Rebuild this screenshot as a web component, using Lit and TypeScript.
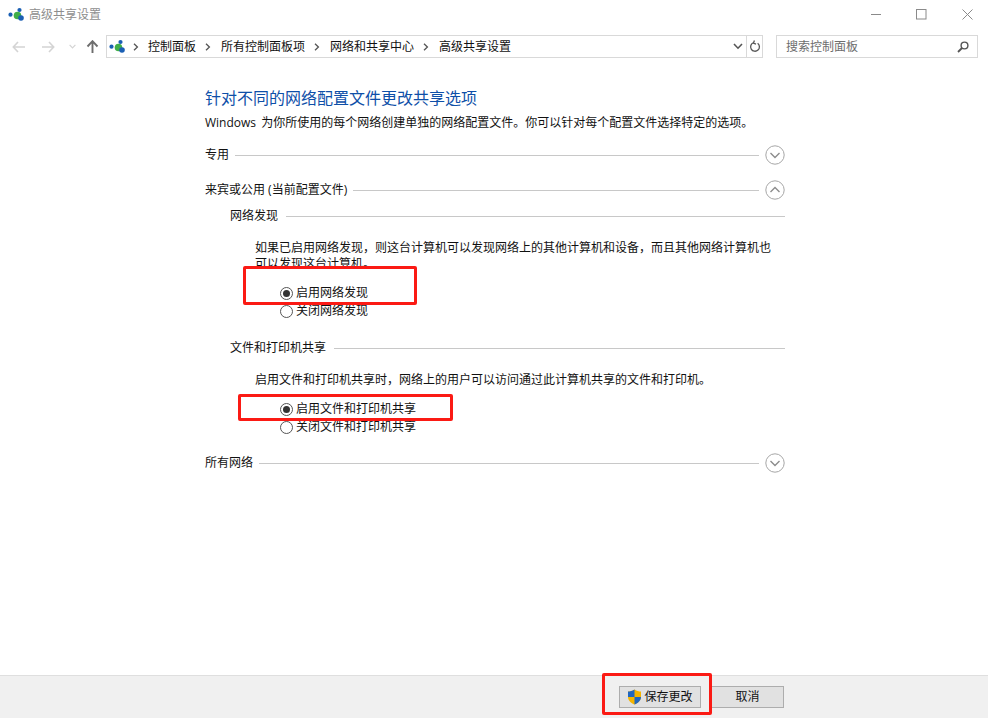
import { LitElement, html, css, svg } from "lit";
import { customElement } from "lit/decorators.js";

const netIcon = svg`<svg class="net" width="18" height="16" viewBox="0 -1 18 16">
  <circle cx="9.5" cy="7.5" r="3.8" fill="#3fae49"/>
  <circle cx="2.5" cy="6.7" r="2.1" fill="#1a5fb4"/>
  <circle cx="11.5" cy="2" r="2.1" fill="#1a5fb4"/>
  <circle cx="13" cy="10" r="2.8" fill="#1a5fb4"/>
</svg>`;

const chev = (up: boolean) => html`<svg class="chev" width="20" height="20" viewBox="0 0 20 20">
  <circle cx="10" cy="10" r="9.2" fill="#fff" stroke="#a6a6a6" stroke-width="1"/>
  <path d=${up ? "M5.5 12 L10 7.5 L14.5 12" : "M5.5 8 L10 12.5 L14.5 8"} fill="none" stroke="#8c8c8c" stroke-width="1.4"/>
</svg>`;

const sep = html`<svg class="sep" width="6" height="8" viewBox="0 0 6 8"><path d="M1 0.8 L4.4 4 L1 7.2" fill="none" stroke="#555" stroke-width="1.3"/></svg>`;

@customElement("app-root")
export class AppRoot extends LitElement {
  static styles = css`
    :host {
      display: flex;
      flex-direction: column;
      position: relative;
      width: 988px;
      height: 718px;
      overflow: hidden;
      background: #fff;
      color: #111;
      font: 12px/16px "Open Sans", "Noto Sans CJK SC", sans-serif;
    }
    .titlebar {
      height: 30px;
      flex: none;
      display: flex;
      align-items: center;
      padding-left: 8px;
      gap: 3px;
      color: #8e8e8e;
    }
    .titlebar .name { flex: 1; }
    .win { display: flex; align-self: flex-start; margin-right: -2px; }
    .win span { width: 45.5px; height: 28px; display: flex; align-items: center; justify-content: center; }
    .nav {
      height: 23px;
      flex: none;
      margin-top: 5px;
      display: flex;
      align-items: center;
      padding-left: 12px;
      padding-right: 10px;
    }
    .navbtns { width: 94px; flex: none; display: flex; align-items: center; }
    .addr {
      width: 657px;
      box-sizing: border-box;
      height: 23px;
      border: 1px solid #d9d9d9;
      display: flex;
      align-items: center;
      padding-left: 2px;
      flex: none;
    }
    .crumbs { flex: 1; display: flex; align-items: center; }
    .crumbs span { margin: 0 9px 0 10px; }
    .crumbs span.lead { margin: 0 0 0 6px; }
    .crumbs span.first { margin-left: 9px; }
    .sep { flex: none; }
    .addr .drop { width: 16px; display: flex; justify-content: center; }
    .addr .ref { width: 15px; height: 21px; border-left: 1px solid #d9d9d9; display: flex; align-items: center; justify-content: center; }
    .search {
      margin-left: 13px;
      width: 202px;
      box-sizing: border-box;
      height: 23px;
      border: 1px solid #d9d9d9;
      display: flex;
      align-items: center;
      justify-content: space-between;
      padding: 0 8px 0 9px;
      color: #6d6d6d;
      flex: none;
    }
    .content {
      flex: 1;
      padding: 0 203px 0 205px;
      box-sizing: border-box;
    }
    h1 {
      margin: 29px 0 0;
      font-size: 16px;
      font-weight: 400;
      line-height: 22px;
      color: #0e4fa8;
    }
    .intro { margin: 6px 0 0; height: 16px; white-space: nowrap; word-spacing: 2px; }
    .group { display: flex; align-items: center; height: 20px; gap: 6px; }
    .group i { flex: 1; height: 1px; background: #c8c8c8; display: block; }
    .g1 { margin-top: 14px; }
    .g2 { margin-top: 15px; }
    .g3 { margin-top: 17px; }
    .sub { display: flex; align-items: center; height: 16px; gap: 8px; margin-left: 25px; }
    .sub i { flex: 1; height: 1px; background: #c8c8c8; display: block; }
    .s1 { margin-top: 8px; }
    .s2 { margin-top: 20px; }
    .para { margin: 0 0 0 50px; width: 520px; line-height: 16px; }
    .p1 { margin-top: 16px; }
    .p2 { margin-top: 16px; }
    .radio { display: flex; align-items: center; height: 18px; margin-left: 75px; gap: 3px; }
    .dot {
      width: 13px; height: 13px; box-sizing: border-box; border-radius: 50%;
      border: 1px solid #555; background: #fff; display: flex; align-items: center; justify-content: center; flex: none;
    }
    .dot.on::after { content: ""; width: 7px; height: 7px; border-radius: 50%; background: #333; }
    .r1 { margin-top: 12px; }
    .r2 { margin-top: 12px; }
    .footer {
      height: 43px;
      flex: none;
      box-sizing: border-box;
      background: #f0f0f0;
      border-top: 1px solid #dfdfdf;
      display: flex;
      justify-content: flex-end;
      align-items: center;
      gap: 10px;
      padding: 0 204px 0 0;
    }
    .btn {
      height: 22px;
      box-sizing: border-box;
      border: 1px solid #adadad;
      background: #e1e1e1;
      color: #111;
      display: flex;
      align-items: center;
      justify-content: center;
      font: inherit;
      padding: 0;
      gap: 2px;
    }
    .save { width: 82px; }
    .cancel { width: 73px; }
    .mark {
      position: absolute;
      box-sizing: border-box;
      border: 3px solid #fb1a14;
      border-radius: 2px;
      pointer-events: none;
    }
    .m1 { left: 243px; top: 266px; width: 174px; height: 39px; }
    .m2 { left: 238px; top: 394px; width: 215px; height: 27px; }
    .m3 { left: 602px; top: 673px; width: 110px; height: 42px; }
  `;

  render() {
    return html`
      <div class="titlebar">
        ${netIcon}
        <span class="name">高级共享设置</span>
        <div class="win">
          <span><svg width="11" height="11" viewBox="0 0 11 11"><path d="M0 5.5H10" stroke="#8a8a8a"/></svg></span>
          <span><svg width="11" height="11" viewBox="0 0 11 11"><rect x="0.5" y="0.5" width="9.5" height="9.5" fill="none" stroke="#8a8a8a"/></svg></span>
          <span><svg width="11" height="11" viewBox="0 0 11 11"><path d="M0.5 0.5L10.5 10.5M10.5 0.5L0.5 10.5" stroke="#8a8a8a"/></svg></span>
        </div>
      </div>
      <div class="nav">
        <div class="navbtns">
          <svg width="14" height="12" viewBox="0 0 14 12" style="margin-right:15px"><path d="M6 1L1.3 6L6 11M1.5 6H13" fill="none" stroke="#d4d4d4" stroke-width="1.6"/></svg>
          <svg width="14" height="12" viewBox="0 0 14 12" style="margin-right:14px"><path d="M8 1L12.7 6L8 11M12.5 6H1" fill="none" stroke="#d4d4d4" stroke-width="1.6"/></svg>
          <svg width="7" height="5" viewBox="0 0 7 5" style="margin-right:10px"><path d="M0.6 0.8L3.5 3.8L6.4 0.8" fill="none" stroke="#d4d4d4" stroke-width="1.2"/></svg>
          <svg width="13" height="13" viewBox="0 0 13 13"><path d="M1.5 6.5L6.5 1.2L11.5 6.5M6.5 1.5V13" fill="none" stroke="#6d6d6d" stroke-width="1.9"/></svg>
        </div>
        <div class="addr">
          ${netIcon}
          <div class="crumbs">
            <span class="lead"></span>${sep}
            <span class="first">控制面板</span>${sep}
            <span>所有控制面板项</span>${sep}
            <span>网络和共享中心</span>${sep}
            <span>高级共享设置</span>
          </div>
          <div class="drop"><svg width="10" height="7" viewBox="0 0 10 7"><path d="M1 1L5 5.2L9 1" fill="none" stroke="#555" stroke-width="1.6"/></svg></div>
          <div class="ref"><svg width="12" height="13" viewBox="0 0 12 13"><path d="M7.2 2.6A4.4 4.4 0 1 1 3.2 3.4M3.2 1V4H6" fill="none" stroke="#555" stroke-width="1.3" transform="rotate(20 6 7)"/></svg></div>
        </div>
        <div class="search">
          <span>搜索控制面板</span>
          <svg width="12" height="12" viewBox="0 0 12 12"><circle cx="7.5" cy="4.5" r="3.4" fill="none" stroke="#555" stroke-width="1.4"/><path d="M5 7L1 11" stroke="#555" stroke-width="1.8"/></svg>
        </div>
      </div>
      <div class="content">
        <h1>针对不同的网络配置文件更改共享选项</h1>
        <p class="intro">Windows 为你所使用的每个网络创建单独的网络配置文件。你可以针对每个配置文件选择特定的选项。</p>
        <div class="group g1"><span>专用</span><i></i>${chev(false)}</div>
        <div class="group g2"><span>来宾或公用 (当前配置文件)</span><i></i>${chev(true)}</div>
        <div class="sub s1"><span>网络发现</span><i></i></div>
        <p class="para p1">如果已启用网络发现，则这台计算机可以发现网络上的其他计算机和设备，而且其他网络计算机也可以发现这台计算机。</p>
        <div class="radio r1"><span class="dot on"></span><span>启用网络发现</span></div>
        <div class="radio"><span class="dot"></span><span>关闭网络发现</span></div>
        <div class="sub s2"><span>文件和打印机共享</span><i></i></div>
        <p class="para p2">启用文件和打印机共享时，网络上的用户可以访问通过此计算机共享的文件和打印机。</p>
        <div class="radio r2"><span class="dot on"></span><span>启用文件和打印机共享</span></div>
        <div class="radio"><span class="dot"></span><span>关闭文件和打印机共享</span></div>
        <div class="group g3"><span>所有网络</span><i></i>${chev(false)}</div>
      </div>
      <div class="footer">
        <button class="btn save">
          <svg width="15" height="16" viewBox="0 0 15 16"><path d="M7.5 0.5C5.5 2 3 2.5 1 2.5V8C1 11.5 4 14 7.5 15.5C11 14 14 11.5 14 8V2.5C12 2.5 9.5 2 7.5 0.5Z" fill="#f4b400"/><path d="M7.5 0.5C5.5 2 3 2.5 1 2.5V8H7.5ZM7.5 8V15.5C11 14 14 11.5 14 8Z" fill="#1f66c1"/></svg>
          <span>保存更改</span>
        </button>
        <button class="btn cancel">取消</button>
      </div>
      <div class="mark m1"></div>
      <div class="mark m2"></div>
      <div class="mark m3"></div>
    `;
  }
}
